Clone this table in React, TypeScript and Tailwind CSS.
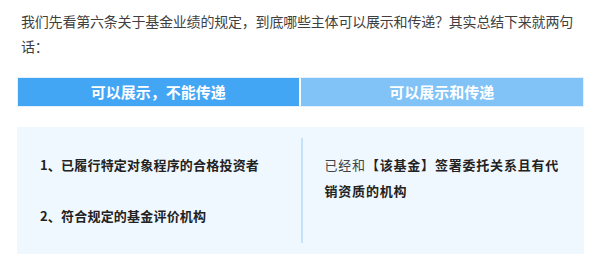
import * as React from "react";

const font = { fontFamily: '"Noto Sans CJK SC", "Noto Sans", sans-serif' };

export default function App() {
    return (
        <div className="w-[605px] h-[262px] bg-white overflow-hidden" style={font}>
            <div className="pt-[9px] pl-[21px] text-[14px] leading-[25px] tracking-[-0.2px] text-[#3f3f3f]">
                <div className="whitespace-nowrap">
                    我们先看第六条关于基金业绩的规定，到底哪些主体可以展示和传递？其实总结下来就两句
                </div>
                <div>话：</div>
            </div>
            <div className="mt-[18px] ml-[17px] w-[567px] grid grid-cols-2 border border-[#e3f1fe] text-white font-bold text-[15px]">
                <div className="h-[28px] flex items-center justify-center bg-[#43a6f5] border-r-2 border-white">
                    可以展示，不能传递
                </div>
                <div className="h-[28px] flex items-center justify-center bg-[#81c2f7]">
                    可以展示和传递
                </div>
            </div>
            <div className="mt-[20px] ml-[17px] w-[567px] h-[127px] bg-[#f0f8ff] py-[11px] grid grid-cols-2">
                <div className="pl-[23px] pt-[14px] flex flex-col gap-[25px] text-[13px] leading-[26px] tracking-[0.2px] font-bold text-[#222]">
                    <div>1、已履行特定对象程序的合格投资者</div>
                    <div>2、符合规定的基金评价机构</div>
                </div>
                <div className="border-l-2 border-[#c5e2fb] pl-[22px] pr-[14px] pt-[14px] text-[13px] leading-[26px] tracking-[0.8px] text-[#222]">
                    <div className="whitespace-nowrap">
                        <span className="text-[#444]">已经和</span>
                        <span className="font-bold">【该基金】签署委托关系且有代</span>
                    </div>
                    <div className="font-bold">销资质的机构</div>
                </div>
            </div>
        </div>
    );
}
